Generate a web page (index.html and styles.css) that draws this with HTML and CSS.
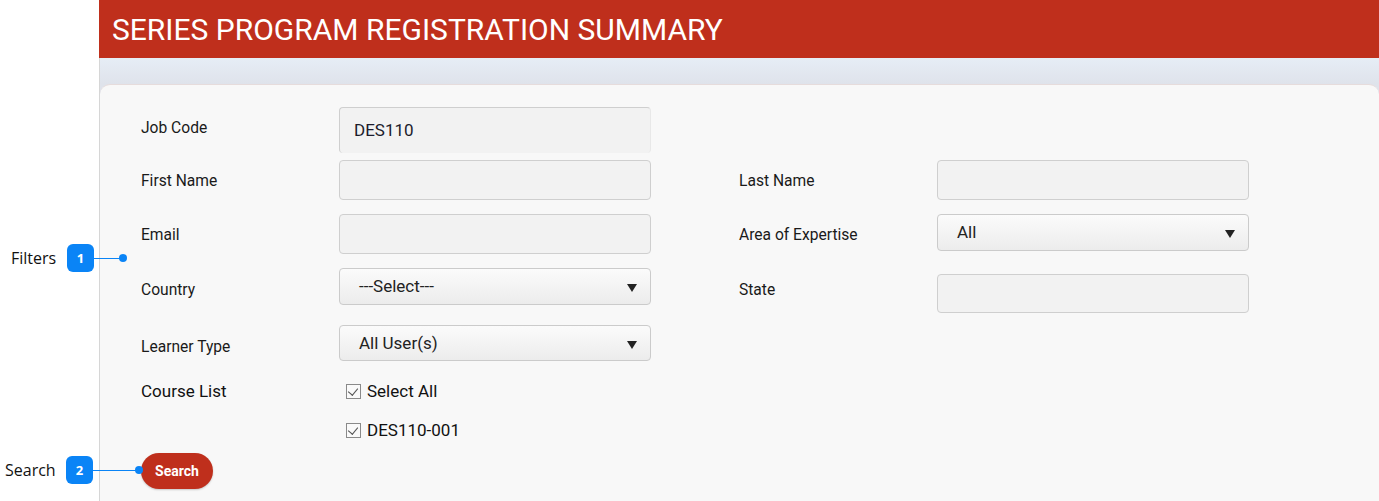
FILE: index.html
```html
<!DOCTYPE html>
<html lang="en">
<head>
    <meta charset="UTF-8">
    <meta name="viewport" content="width=device-width, initial-scale=1.0">
    <title>Series Program Registration Summary</title>
    <link rel="stylesheet" href="styles.css">
</head>
<body>
    <div class="gutter"></div>
    <div class="page">
        <h1 class="title">SERIES PROGRAM REGISTRATION SUMMARY</h1>
        <div class="band">
            <div class="card">
                <div class="row r-job">
                    <label class="lbl">Job Code</label>
                    <div class="field job">DES110</div>
                </div>
                <div class="row">
                    <label class="lbl">First Name</label>
                    <div class="field"></div>
                    <label class="lbl">Last Name</label>
                    <div class="field"></div>
                </div>
                <div class="row">
                    <label class="lbl">Email</label>
                    <div class="field"></div>
                    <label class="lbl">Area of Expertise</label>
                    <div class="select short">All<span class="caret"></span></div>
                </div>
                <div class="row r-country">
                    <label class="lbl">Country</label>
                    <div class="select">---Select---<span class="caret"></span></div>
                    <label class="lbl">State</label>
                    <div class="field state"></div>
                </div>
                <div class="row r-learner">
                    <label class="lbl">Learner Type</label>
                    <div class="select">All User(s)<span class="caret"></span></div>
                </div>
                <div class="row r-course">
                    <label class="lbl big">Course List</label>
                    <div class="checks">
                        <div class="check"><span class="box"></span>Select All</div>
                        <div class="check"><span class="box"></span>DES110-001</div>
                    </div>
                </div>
                <button class="search">Search</button>
            </div>
        </div>
    </div>

    <div class="note n1">
        <span class="note-text">Filters</span>
        <span class="badge">1</span>
        <span class="line" style="width: 29px"></span>
        <span class="dot"></span>
    </div>
    <div class="note n2">
        <span class="note-text">Search</span>
        <span class="badge">2</span>
        <span class="line" style="width: 46px"></span>
        <span class="dot"></span>
    </div>
</body>
</html>
```

FILE: styles.css
```css
body {
    margin: 0;
    font-family: Roboto, "Liberation Sans", sans-serif;
    background: #fff;
    display: flex;
    height: 501px;
    overflow: hidden;
}
.gutter {
    width: 99px;
    flex-shrink: 0;
}
.page {
    flex: 1;
    display: flex;
    flex-direction: column;
}
.title {
    margin: 0;
    height: 58px;
    line-height: 60px;
    background: #bf2f1c;
    color: #fff;
    font-weight: 400;
    font-size: 30px;
    padding-left: 13px;
}
.band {
    flex: 1;
    background: linear-gradient(#e6edf6, #dfe3eb 26px, #dfe3eb);
    border-left: 1px solid #d6d6d6;
    padding-top: 26px;
    display: flex;
}
.card {
    flex: 1;
    background: #f8f8f8;
    border-top: 1px solid #e6dcdc;
    border-radius: 10px 10px 0 0;
    padding: 22px 0 0 41px;
    display: flex;
    flex-direction: column;
}
.row {
    display: grid;
    grid-template-columns: 198px 400px 198px 312px;
    align-items: center;
    margin-bottom: 14px;
}
.lbl {
    font-size: 15.6px;
    line-height: 20px;
    padding-top: 2px;
    color: #1a1a1a;
}
.lbl.big {
    font-size: 17px;
    padding-top: 0;
    color: #111;
}
.field {
    width: 312px;
    height: 40px;
    box-sizing: border-box;
    background: #f2f2f2;
    border: 1px solid #cfcfcf;
    border-radius: 4px;
    font-size: 17px;
    color: #1c1c2c;
    padding: 0 14px;
    line-height: 44px;
}
.r-job {
    align-items: start;
    margin-bottom: 7px;
}
.r-job .lbl {
    margin-top: 9px;
}
.field.job {
    border-bottom: none;
    border-right-color: #e8e8e8;
    height: 46px;
}
.field.state {
    margin-top: 6px;
    height: 39px;
}
.select {
    position: relative;
    width: 312px;
    height: 37px;
    box-sizing: border-box;
    background: linear-gradient(#fbfbfb, #ececec);
    border: 1px solid #cbcbcb;
    border-radius: 4px;
    font-size: 17px;
    color: #222;
    padding-left: 19px;
    line-height: 34px;
}
.select.short {
    align-self: start;
}
.caret {
    position: absolute;
    right: 13px;
    top: 15px;
    border-left: 5px solid transparent;
    border-right: 5px solid transparent;
    border-top: 8px solid #222;
}
.r-country {
    align-items: start;
    margin-bottom: 12px;
}
.r-country .lbl, .r-learner .lbl {
    margin-top: 10px;
}
.r-learner {
    align-items: start;
    margin-bottom: 20px;
}
.r-learner .select {
    height: 36px;
}
.r-course {
    align-items: start;
    margin-bottom: 13px;
}
.checks {
    display: flex;
    flex-direction: column;
    gap: 19px;
    padding-left: 7px;
}
.check {
    display: flex;
    align-items: center;
    font-size: 17px;
    color: #111;
    height: 20px;
}
.box {
    width: 13px;
    height: 13px;
    border: 1px solid #8a8a8a;
    background: #fafafa;
    margin-right: 6px;
    position: relative;
}
.box::after {
    content: "";
    position: absolute;
    left: 3px;
    top: 1px;
    width: 5px;
    height: 8px;
    border-right: 1.5px solid #555;
    border-bottom: 1.5px solid #555;
    transform: rotate(40deg);
}
.search {
    align-self: flex-start;
    width: 72px;
    height: 36px;
    border: none;
    border-radius: 18px;
    background: #bf2f1c;
    color: #fff;
    font-family: Roboto, "Liberation Sans", sans-serif;
    font-weight: bold;
    font-size: 14px;
    box-shadow: 0 1px 2px rgba(0, 0, 0, 0.2);
    cursor: pointer;
}

/* annotation callouts */
.note {
    position: absolute;
    display: flex;
    align-items: center;
}
.n1 {
    left: 11px;
    top: 244px;
}
.n2 {
    left: 5px;
    top: 456px;
}
.note-text {
    font-family: "Open Sans", sans-serif;
    font-size: 16px;
    color: #111;
    width: 56px;
}
.n2 .note-text {
    width: 61px;
}
.badge {
    width: 27px;
    height: 28px;
    border-radius: 6px;
    background: #0a84f6;
    color: #fff;
    font-family: "Open Sans", sans-serif;
    font-weight: bold;
    font-size: 13px;
    display: flex;
    align-items: center;
    justify-content: center;
}
.line {
    height: 1px;
    background: #0a84f6;
}
.dot {
    width: 8px;
    height: 8px;
    border-radius: 50%;
    background: #0a84f6;
    margin-left: -4px;
}
```
